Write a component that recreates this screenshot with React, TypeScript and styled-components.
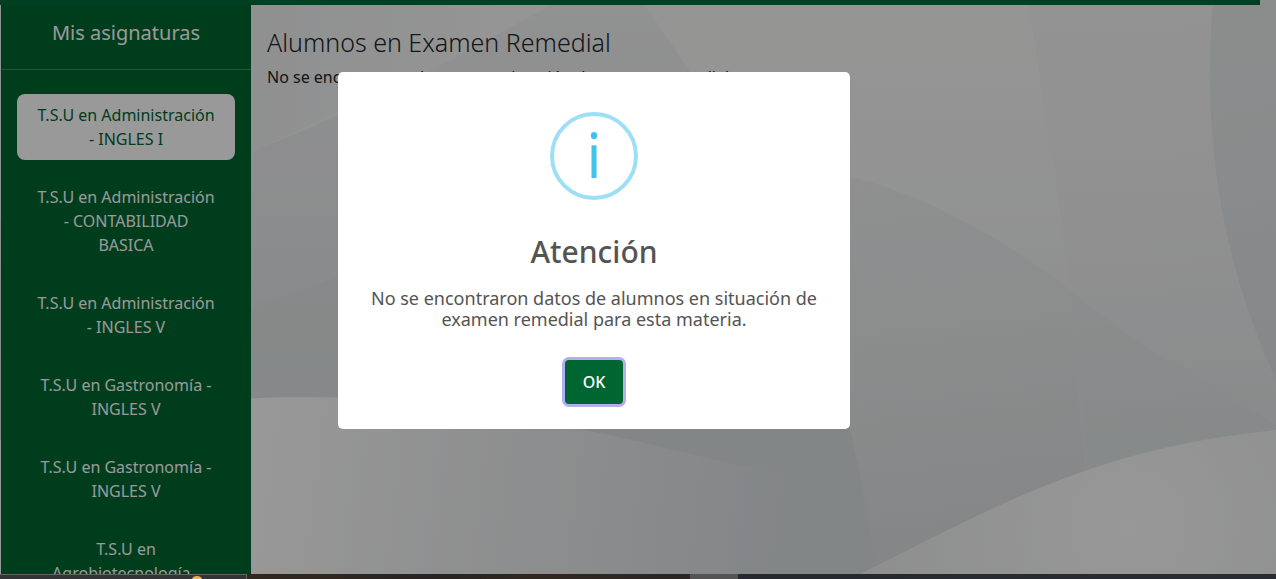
import React from "react";
import styled, { createGlobalStyle } from "styled-components";

const GlobalStyle = createGlobalStyle`
  *, *::before, *::after { box-sizing: border-box; }
  body {
    margin: 0;
    font-family: "Noto Sans", "Open Sans", sans-serif;
    font-size: 16px;
    line-height: 24px;
    color: #212529;
    background: #e9eaeb;
  }
`;

const Page = styled.div`
  position: relative;
  display: flex;
  flex-direction: column;
  height: 100vh;
  overflow: hidden;
`;

const Backdrop = styled.svg`
  position: absolute;
  inset: 0;
  width: 100%;
  height: 100%;
`;

const TopBar = styled.header`
  position: relative;
  flex: none;
  height: 5px;
  margin-right: 16px;
  background: #006937;
`;

const Columns = styled.div`
  position: relative;
  display: flex;
  flex: 1;
  min-height: 0;
  padding-left: 1px;
`;

const Sidebar = styled.aside`
  flex: none;
  width: 250px;
  overflow: hidden;
  background: #006631;
  color: #fff;
  text-align: center;
`;

const SidebarTitle = styled.h2`
  margin: 0;
  padding: 16px 16px 24px;
  border-bottom: 1px solid #3b8a60;
  font-size: 20px;
  line-height: 24px;
  font-weight: 400;
`;

const SubjectList = styled.ul`
  display: flex;
  flex-direction: column;
  gap: 16px;
  margin: 0;
  padding: 24px 16px;
  list-style: none;
`;

const SubjectLink = styled.a<{ $active?: boolean }>`
  display: block;
  padding: 9px 18px;
  border-radius: 8px;
  text-decoration: none;
  color: ${(p) => (p.$active ? "#006631" : "#fff")};
  background: ${(p) => (p.$active ? "#fff" : "transparent")};
`;

const Content = styled.main`
  flex: 1;
  min-width: 0;
  padding: 22px 16px;
`;

const PageTitle = styled.h1`
  margin: 0 0 8px;
  font-size: 25px;
  line-height: 30px;
  font-weight: 300;
`;

const Message = styled.p`
  margin: 0;
`;

const Overlay = styled.div`
  position: fixed;
  inset: 0;
  display: flex;
  justify-content: center;
  align-items: flex-start;
  padding: 72px 88px 0 0;
  background: rgba(0, 0, 0, 0.4);
`;

const Dialog = styled.section`
  display: flex;
  flex-direction: column;
  align-items: center;
  width: 512px;
  max-width: 100%;
  padding: 40px 20px 25px;
  border-radius: 5px;
  background: #fff;
  color: #545454;
  text-align: center;
`;

const InfoIcon = styled.svg`
  width: 88px;
  height: 88px;
`;

const DialogTitle = styled.h2`
  margin: 32px 0 16px;
  font-size: 30px;
  line-height: 40px;
  font-weight: 500;
`;

const DialogText = styled.p`
  margin: 0 0 30px;
  font-size: 18px;
  line-height: 21px;
`;

const ConfirmButton = styled.button`
  height: 44px;
  padding: 0 18px;
  border: 0;
  border-radius: 4px;
  background: #006631;
  box-shadow: 0 0 0 3px #b5aeee;
  color: #fff;
  font: inherit;
  font-weight: 500;
`;

const Taskbar = styled.footer`
  position: relative;
  z-index: 2;
  display: flex;
  flex: none;
  height: 5px;
  background: linear-gradient(90deg, #2a2421, #30271f 25%, #272423 33%, #30271f 42%, #2b2624 54%, #25292e 58%, #292d33);
`;

const SearchBox = styled.div`
  display: flex;
  justify-content: flex-end;
  width: 247px;
  padding-right: 44px;
  border: 1px solid #636363;
  border-width: 1px 1px 0 0;
  background: #333435;
`;

const ActiveApp = styled.div`
  width: 48px;
  margin-left: 443px;
  background: #555455;
`;

const subjects = [
  "T.S.U en Administración - INGLES I",
  "T.S.U en Administración - CONTABILIDAD BASICA",
  "T.S.U en Administración - INGLES V",
  "T.S.U en Gastronomía - INGLES V",
  "T.S.U en Gastronomía - INGLES V",
  "T.S.U en Agrobiotecnología - INGLES V",
];

function Waves() {
  return (
    <Backdrop viewBox="0 0 1276 579" preserveAspectRatio="none" aria-hidden="true">
      <defs>
        <linearGradient id="base" x1="0" y1="0" x2="0" y2="1">
          <stop offset="0" stopColor="#f9f9f8" />
          <stop offset="0.35" stopColor="#f4f5f5" />
          <stop offset="1" stopColor="#dee1e3" />
        </linearGradient>
        <linearGradient id="corner" x1="251" y1="0" x2="500" y2="0" gradientUnits="userSpaceOnUse">
          <stop offset="0" stopColor="#eff0f1" />
          <stop offset="1" stopColor="#f8f8f8" />
        </linearGradient>
        <linearGradient id="left" x1="0" y1="0" x2="0" y2="400" gradientUnits="userSpaceOnUse">
          <stop offset="0" stopColor="#f2f3f3" />
          <stop offset="0.4" stopColor="#ebecee" />
          <stop offset="1" stopColor="#e0e4e5" />
        </linearGradient>
        <linearGradient id="mid" x1="820" y1="170" x2="860" y2="560" gradientUnits="userSpaceOnUse">
          <stop offset="0" stopColor="#eff0f1" />
          <stop offset="0.5" stopColor="#e7eaea" />
          <stop offset="1" stopColor="#dce0e2" />
        </linearGradient>
        <linearGradient id="strip" x1="1110" y1="0" x2="1130" y2="450" gradientUnits="userSpaceOnUse">
          <stop offset="0" stopColor="#f5f5f5" />
          <stop offset="0.5" stopColor="#f1f1f2" />
          <stop offset="1" stopColor="#e3e7e8" />
        </linearGradient>
        <linearGradient id="hill" x1="251" y1="430" x2="800" y2="500" gradientUnits="userSpaceOnUse">
          <stop offset="0" stopColor="#fefefe" />
          <stop offset="0.4" stopColor="#eff0f1" />
          <stop offset="1" stopColor="#dadfe1" />
        </linearGradient>
        <linearGradient id="edge" x1="1209" y1="60" x2="1276" y2="380" gradientUnits="userSpaceOnUse">
          <stop offset="0" stopColor="#e8ebec" />
          <stop offset="1" stopColor="#dfe3e4" />
        </linearGradient>
        <radialGradient id="glow" cx="1128" cy="527" r="240" gradientUnits="userSpaceOnUse">
          <stop offset="0" stopColor="#fdfdfd" />
          <stop offset="1" stopColor="#eeefef" />
        </radialGradient>
      </defs>
      <rect width="1276" height="579" fill="url(#base)" />
      <path d="M0 0H560L430 70L251 152L0 220Z" fill="url(#corner)" />
      <path d="M0 220Q180 190 251 152Q400 92 550 5L645 5L690 72L850 176L850 579H0Z" fill="url(#left)" />
      <path d="M0 360Q200 330 338 277V420H0Z" fill="#dde2e3" opacity="0.45" />
      <path d="M1028 0Q1052 150 1070 290L1090 470L1276 450V0Z" fill="url(#strip)" />
      <path d="M500 200Q700 140 850 176Q960 205 1070 290L1094 579H500Z" fill="url(#mid)" />
      <path d="M1070 290Q1130 340 1200 380T1276 425V480H1087Z" fill="#dfe4e5" opacity="0.35" />
      <path d="M500 400H843Q868 500 877 579H500Z" fill="#dadfe1" />
      <path d="M0 440Q180 397 300 397C450 397 570 425 730 463Q790 475 850 480V579H0Z" fill="url(#hill)" />
      <path d="M1213 0Q1195 205 1276 380V0Z" fill="url(#edge)" />
      <path d="M850 579C990 510 1090 448 1276 430V579Z" fill="url(#glow)" />
    </Backdrop>
  );
}

export default function App() {
  return (
    <>
      <GlobalStyle />
      <Page>
        <Waves />
        <TopBar />
        <Columns>
          <Sidebar>
            <SidebarTitle>Mis asignaturas</SidebarTitle>
            <nav aria-label="Mis asignaturas">
              <SubjectList>
                {subjects.map((name, i) => (
                  <li key={i}>
                    <SubjectLink href="#" $active={i === 0}>{name}</SubjectLink>
                  </li>
                ))}
              </SubjectList>
            </nav>
          </Sidebar>
          <Content>
            <PageTitle>Alumnos en Examen Remedial</PageTitle>
            <Message>No se encontraron alumnos en situación de examen remedial.</Message>
          </Content>
        </Columns>
        <Overlay>
          <Dialog role="dialog" aria-modal="true" aria-labelledby="dialog-title">
            <InfoIcon viewBox="0 0 88 88" aria-hidden="true">
              <circle cx="44" cy="44" r="42" fill="none" stroke="#9de0f6" strokeWidth="4" />
              <ellipse cx="44" cy="23.6" rx="3.2" ry="3.6" fill="#3fc3ee" />
              <rect x="41.5" y="33.3" width="5" height="32.7" fill="#3fc3ee" />
            </InfoIcon>
            <DialogTitle id="dialog-title">Atención</DialogTitle>
            <DialogText>
              No se encontraron datos de alumnos en situación de examen remedial para esta materia.
            </DialogText>
            <ConfirmButton type="button">OK</ConfirmButton>
          </Dialog>
        </Overlay>
        <Taskbar>
          <SearchBox>
            <svg width="10" height="4" viewBox="0 0 10 4" aria-hidden="true">
              <path d="M0 4Q1 1 5 1Q9 1 10 4Z" fill="#e8b45a" />
            </svg>
          </SearchBox>
          <ActiveApp />
        </Taskbar>
      </Page>
    </>
  );
}
